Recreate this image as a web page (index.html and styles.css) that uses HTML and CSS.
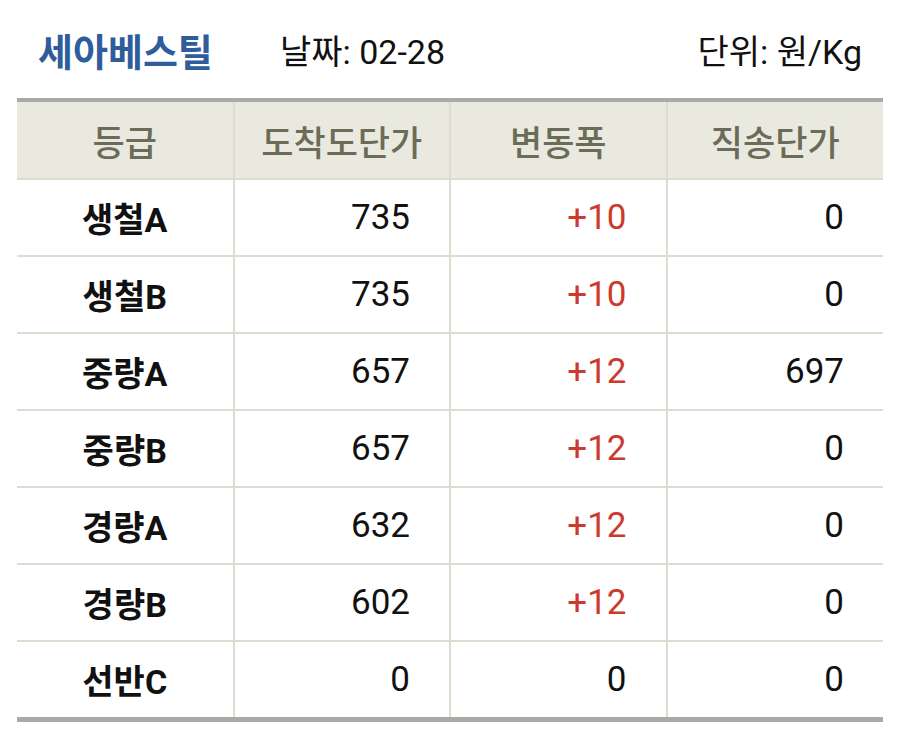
FILE: index.html
```html
<!DOCTYPE html>
<html lang="ko">
<head>
<meta charset="utf-8">
<link rel="stylesheet" href="styles.css">
</head>
<body>
<div class="page">
  <div class="top">
    <div class="brand">세아베스틸</div>
    <div class="date">날짜: 02-28</div>
    <div class="unit">단위: 원/Kg</div>
  </div>
  <table class="price">
    <thead>
      <tr><th>등급</th><th>도착도단가</th><th>변동폭</th><th>직송단가</th></tr>
    </thead>
    <tbody>
      <tr><td class="grade">생철A</td><td class="num">735</td><td class="num up">+10</td><td class="num">0</td></tr>
      <tr><td class="grade">생철B</td><td class="num">735</td><td class="num up">+10</td><td class="num">0</td></tr>
      <tr><td class="grade">중량A</td><td class="num">657</td><td class="num up">+12</td><td class="num">697</td></tr>
      <tr><td class="grade">중량B</td><td class="num">657</td><td class="num up">+12</td><td class="num">0</td></tr>
      <tr><td class="grade">경량A</td><td class="num">632</td><td class="num up">+12</td><td class="num">0</td></tr>
      <tr><td class="grade">경량B</td><td class="num">602</td><td class="num up">+12</td><td class="num">0</td></tr>
      <tr><td class="grade">선반C</td><td class="num">0</td><td class="num">0</td><td class="num">0</td></tr>
    </tbody>
  </table>
</div>
</body>
</html>
```
FILE: styles.css
```css
html, body {
  margin: 0;
  padding: 0;
  background: #ffffff;
}
body {
  font-family: Roboto, "Noto Sans CJK KR", sans-serif;
  color: #111111;
}
.page {
  padding: 0 22px 0 17px;
}
.top {
  display: flex;
  align-items: center;
  height: 98px;
  padding: 0 21px 0 21px;
}
.brand {
  font-size: 38px;
  font-weight: 700;
  color: #2f5d9b;
  width: 242px;
}
.date {
  font-size: 34px;
  flex: 1;
}
.unit {
  font-size: 34px;
}
.price {
  width: 866px;
  border-collapse: collapse;
  table-layout: fixed;
  border-top: 4px solid #a9a9a5;
  border-bottom: 5px solid #a9a9a5;
}
.price th, .price td {
  border-left: 2px solid #dcdcd0;
  border-right: 2px solid #dcdcd0;
  border-top: 2px solid #dcdcd0;
  padding-top: 0;
  padding-bottom: 0;
}
.price th:first-child, .price td:first-child {
  border-left: none;
}
.price th:last-child, .price td:last-child {
  border-right: none;
}
.price th {
  background: #e9e9df;
  color: #6b6b57;
  font-size: 35px;
  font-weight: 500;
  height: 76px;
  border-top: none;
}
.price td {
  height: 75px;
}
.grade {
  text-align: center;
  font-weight: 700;
  font-size: 34px;
}
.num {
  text-align: right;
  padding-right: 39px;
  font-size: 35px;
}
.up {
  color: #cc3a2e;
}
```
